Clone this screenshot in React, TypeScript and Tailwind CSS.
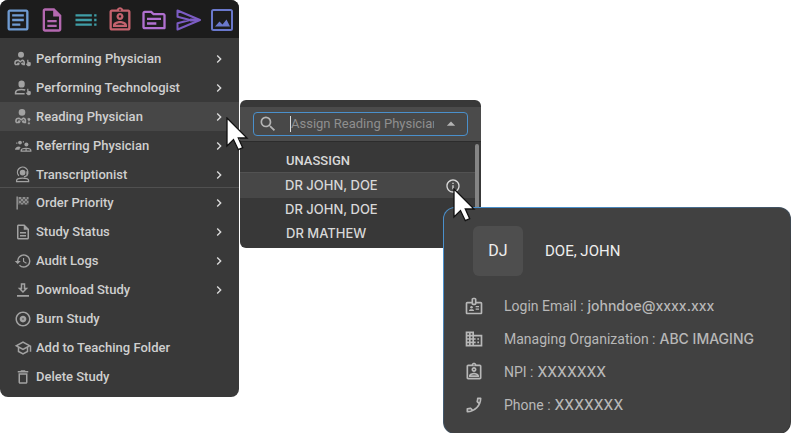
import type { ReactNode } from "react";
import {
  MdArrowDropUp,
  MdBusiness,
  MdChevronRight,
  MdDeleteOutline,
  MdHistory,
  MdInfoOutline,
  MdOutlineAlbum,
  MdOutlineArticle,
  MdOutlineAssignmentInd,
  MdOutlineBadge,
  MdOutlineCall,
  MdOutlineDescription,
  MdOutlinePhotoSizeSelectActual,
  MdOutlineSchool,
  MdOutlineTopic,
  MdSearch,
  MdToc,
} from "react-icons/md";

const SendIcon = () => (
  <svg viewBox="0 0 28 28" className="size-7" fill="none" stroke="currentColor" strokeWidth="2">
    <path d="M3.5 4.5 26 14 3.5 23.5v-6.3L16 14 3.5 10.8Z" strokeLinejoin="round" />
    <path d="M16 14h8" strokeWidth="3" />
  </svg>
);

const DownloadIcon = () => (
  <svg viewBox="0 0 24 24" className="size-[18px]" fill="currentColor">
    <path d="M19 9h-4V3H9v6H5l7 7 7-7Zm-8 2V5h2v6h1.2L12 13.2 9.8 11H11ZM4 18.500h16v2.500H4Z" />
  </svg>
);

const PhysicianIcon = () => (
  <svg viewBox="0 0 18 18" className="size-[18px]" fill="currentColor">
    <circle cx="7" cy="4.800" r="3" />
    <path
      d="M1 14.500v-2c0-1.600 1.400-2.300 3.400-2.300l1.800 1.600 2-1.600c1.400.2 2 1 2 2.400v1.900H8.600M1 14.500h3.800"
      fill="none"
      stroke="currentColor"
      strokeWidth="1.5"
    />
    <circle cx="4.400" cy="13.800" r="1.300" />
    <circle cx="8.400" cy="13.600" r="1.200" />
    <path d="M13.200 9.800h1.200v2l2.400.6v2.200c0 1-.7 1.600-1.600 1.600h-1.400l-2-2.200.6-.6.800.3Z" />
  </svg>
);

const TechnologistIcon = () => (
  <svg viewBox="0 0 18 18" className="size-[18px]" fill="currentColor">
    <path d="M4.500 4.200C4.500 2.400 5.800 1.500 7.600 1.500s3.100.9 3.100 2.700v1.200A3.100 3.100 0 0 1 7.600 8.600a3.100 3.100 0 0 1-3.100-3.200Z" />
    <path
      d="M10.600 14.700H1.600v-1.200c0-2 2.700-3 6-3 1.400 0 2.600.2 3.600.6"
      fill="none"
      stroke="currentColor"
      strokeWidth="1.600"
    />
    <path d="M13.200 9.800h1.200v2l2.400.6v2.200c0 1-.7 1.600-1.600 1.600h-1.400l-2-2.200.6-.6.800.3Z" />
  </svg>
);

const ReadingIcon = () => (
  <svg viewBox="0 0 18 18" className="size-[18px]" fill="currentColor">
    <circle cx="8" cy="4.400" r="3.300" />
    <path
      d="M2 14.500v-2.100c0-1.600 1.200-2.200 3-2.200l2.200 1.600 2.200-1.600c1.600.2 2 1 2 2.400v1.900H9.500M2 14.500h3.500"
      fill="none"
      stroke="currentColor"
      strokeWidth="1.600"
    />
    <circle cx="5.200" cy="13.600" r="1.300" />
    <circle cx="9.200" cy="13.600" r="1.300" />
    <path d="M13.400 11c.4-1 2.800-1 2.800.4 0 1-1.300 1-1.300 2.200M14.200 14.700h1.400V16h-1.400Z" stroke="currentColor" strokeWidth=".6" />
  </svg>
);

const ReferringIcon = () => (
  <svg viewBox="0 0 18 18" className="size-[18px]" fill="currentColor">
    <circle cx="6" cy="5.600" r="1.900" />
    <circle cx="12.400" cy="7.600" r="2" />
    <path d="M1 12.800c0-2 1.600-3.200 4.200-3.400l1.500 1.200c-.9.6-1.200 1.300-1.200 2.200H1Z" />
    <path
      d="M7.200 14.200v-.8c0-1.200 2-2 4.900-2s4.700.8 4.700 2v.8Z"
      fill="none"
      stroke="currentColor"
      strokeWidth="1.300"
    />
    <path d="M11.500 11h1.200v3h-1.200ZM2.200 5.500h1.200v1.200H2.200ZM8.800 4.200H10v1.200H8.800Z" />
  </svg>
);

const TranscriptionistIcon = () => (
  <svg viewBox="0 0 18 18" className="size-[18px]" fill="none" stroke="currentColor" strokeWidth="1.300">
    <circle cx="8.600" cy="6.600" r="2.200" fill="currentColor" />
    <path d="M4.800 9.800A5.200 5.200 0 1 1 13 9.200M13 5.200v4.400l-3 1.200" />
    <path d="M2.600 15.600v-1c0-1.600 2.600-2.500 6-2.500s6 .9 6 2.500v1Z" />
  </svg>
);

const FlagIcon = () => (
  <svg viewBox="0 0 18 18" className="size-[18px]" fill="currentColor">
    <path d="M2.500 2.500h1.300v13H2.500Z" />
    <path d="M5 3h2v2H5ZM9 3h2v2H9ZM13 3h1.500v2H13ZM7 5h2v2H7ZM11 5h2v2h-2ZM5 7h2v2H5ZM9 7h2v2H9ZM13 7h1.500v2H13ZM7 9h2v1.500H7ZM11 9h2v1.500h-2Z" opacity=".7" />
    <path d="M4 3h10.500v7.500H4Z" opacity=".35" />
  </svg>
);

const Cursor = () => (
  <svg viewBox="0 0 24 35" className="h-[35px] w-6" fill="#fff" stroke="#111" strokeWidth="1.3">
    <path d="M1 1v28l6.500-6.500 4.800 10.200 4.400-2-4.400-9.700H21Z" />
  </svg>
);

const toolbar = [
  { label: "Report", color: "text-[#6f9bd2]", icon: <MdOutlineArticle /> },
  { label: "Document", color: "text-[#b468b0]", icon: <MdOutlineDescription /> },
  { label: "List", color: "text-[#3f9da6]", icon: <MdToc /> },
  { label: "Patient", color: "text-[#c4626d]", icon: <MdOutlineAssignmentInd /> },
  { label: "Folder", color: "text-[#b070d0]", icon: <MdOutlineTopic /> },
  { label: "Send", color: "text-[#7c5cc4]", icon: <SendIcon /> },
  // the package only has the landscape version of this one
  {
    label: "Images",
    color: "text-[#6a78cc]",
    icon: (
      <svg viewBox="0 0 28 28" className="size-7" fill="none" stroke="currentColor" strokeWidth="2">
        <rect x="4" y="4" width="20" height="20" rx="1.500" />
        <path d="M7 20.500 11.500 15.500l3 3 4-5 3.500 7Z" fill="currentColor" stroke="none" />
      </svg>
    ),
  },
];

type Item = { label: string; icon: ReactNode; sub?: boolean; active?: boolean };

const assignItems: Item[] = [
  { label: "Performing Physician", icon: <PhysicianIcon />, sub: true },
  { label: "Performing Technologist", icon: <TechnologistIcon />, sub: true },
  { label: "Reading Physician", icon: <ReadingIcon />, sub: true, active: true },
  { label: "Referring Physician", icon: <ReferringIcon />, sub: true },
  { label: "Transcriptionist", icon: <TranscriptionistIcon />, sub: true },
];

const studyItems: Item[] = [
  { label: "Order Priority", icon: <FlagIcon />, sub: true },
  { label: "Study Status", icon: <MdOutlineDescription />, sub: true },
  { label: "Audit Logs", icon: <MdHistory />, sub: true },
  { label: "Download Study", icon: <DownloadIcon />, sub: true },
  { label: "Burn Study", icon: <MdOutlineAlbum /> },
  { label: "Add to Teaching Folder", icon: <MdOutlineSchool /> },
  { label: "Delete Study", icon: <MdDeleteOutline /> },
];

const details = [
  { label: "Login Email :", value: "johndoe@xxxx.xxx", icon: <MdOutlineBadge /> },
  { label: "Managing Organization :", value: "ABC IMAGING", icon: <MdBusiness /> },
  { label: "NPI :", value: "XXXXXXX", icon: <MdOutlineAssignmentInd /> },
  { label: "Phone :", value: "XXXXXXX", icon: <MdOutlineCall className="-scale-x-100" /> },
];

const MenuItem = ({ label, icon, sub, active }: Item) => (
  <button
    type="button"
    className={`flex h-[29px] w-full items-center gap-1 pr-3 pl-3.5 text-left ${active ? "bg-[#474747]" : ""}`}
  >
    <span className="shrink-0 text-lg text-[#a2a2a2]">{icon}</span>
    <span className="flex-1 text-[13px] font-medium text-[#cfcfcf]">{label}</span>
    {sub && <MdChevronRight className="size-4 text-[#dddddd]" />}
  </button>
);

const ContextMenu = () => (
  <nav className="relative w-[239px] shrink-0 self-start rounded-lg bg-[#393939] pb-1.5">
    <div className="mb-1.5 flex h-[38px] items-center rounded-t-lg bg-[#1c1c1c] pt-0.5 pl-px">
      {toolbar.map((tool) => (
        <button
          key={tool.label}
          type="button"
          aria-label={tool.label}
          className={`flex flex-1 justify-center text-[28px] ${tool.color}`}
        >
          {tool.icon}
        </button>
      ))}
    </div>
    {assignItems.map((item) => (
      <MenuItem key={item.label} {...item} />
    ))}
    <hr className="-mt-0.5 border-[#505050]" />
    {studyItems.map((item) => (
      <MenuItem key={item.label} {...item} />
    ))}
    <div className="pointer-events-none absolute top-[117px] left-[226px] z-10">
      <Cursor />
    </div>
  </nav>
);

const UserCard = () => (
  <section className="absolute top-[107px] left-[203px] w-[348px] rounded-xl bg-linear-to-br from-[#4a90cc] from-20% to-[#3a3a3a] to-60% p-px">
    <div className="rounded-[11px] bg-[#414141] px-[29px] pt-[18px] pb-3">
      <div className="mb-[13px] flex items-center gap-[22px]">
        <div className="flex size-[50px] items-center justify-center rounded-md bg-[#4e4e4e] text-base text-[#eeeeee]">
          DJ
        </div>
        <h2 className="text-[15px] text-[#eeeeee]">DOE, JOHN</h2>
      </div>
      <ul className="-ml-[9px]">
        {details.map((row) => (
          <li key={row.label} className="flex h-[33px] items-center gap-5 text-sm text-[#b8b8b8]">
            <span className="text-xl">{row.icon}</span>
            <span className="flex items-center gap-1">
              {row.label}
              <span className="font-['Inter',sans-serif] font-medium">{row.value}</span>
            </span>
          </li>
        ))}
      </ul>
    </div>
  </section>
);

const PhysicianPicker = () => (
  <div className="relative mt-[100px] ml-px w-[241px] shrink-0 self-start">
    <div className="overflow-hidden rounded-md bg-[#383838] pt-[7px]">
      <div className="border-b border-[#2c2c2c] bg-[#4b4b4b] px-[13px] py-[5px]">
        <label className="flex h-6 items-center rounded-sm border border-[#4a90cc] bg-[#484848] pr-1.5 pl-1">
          <MdSearch className="size-5 shrink-0 text-[#b4b4b4]" />
          <span className="ml-3 h-4 w-px shrink-0 bg-[#dddddd]" />
          <input
            type="text"
            aria-label="Assign Reading Physician"
            placeholder="Assign Reading Physician"
            className="w-[143px] min-w-0 bg-transparent text-[13px] text-[#cccccc] outline-none placeholder:text-[#8f8f8f]"
          />
          <MdArrowDropUp className="ml-auto size-5 shrink-0 text-[#b4b4b4]" />
        </label>
      </div>
      <div className="flex">
        <ul className="flex-1 pb-0.5 font-['Inter',sans-serif] text-[13px] font-medium text-[#d8d8d8]">
          <li>
            <button type="button" className="h-[30px] w-full pt-2 pl-[46px] text-left font-['Roboto',sans-serif]">
              UNASSIGN
            </button>
          </li>
          <li className="flex h-[26px] items-center justify-between border-t border-[#525252] bg-[#474747] pr-3.5">
            <button type="button" className="flex-1 pt-px pl-[45px] text-left">
              DR JOHN, DOE
            </button>
            <button type="button" aria-label="Show details">
              <MdInfoOutline className="size-4" />
            </button>
          </li>
          <li>
            <button type="button" className="h-6 w-full pl-[45px] text-left">
              DR JOHN, DOE
            </button>
          </li>
          <li>
            <button type="button" className="h-6 w-full pl-[46px] text-left">
              DR MATHEW
            </button>
          </li>
        </ul>
        <div className="mt-0.5 mr-0.5 w-1 rounded-t-full bg-[#858585]" />
      </div>
    </div>
    <UserCard />
    <div className="pointer-events-none absolute top-[88px] left-[213px]">
      <Cursor />
    </div>
  </div>
);

export default function App() {
  return (
    <main className="flex min-h-screen bg-white font-['Roboto',sans-serif]">
      <ContextMenu />
      <PhysicianPicker />
    </main>
  );
}
